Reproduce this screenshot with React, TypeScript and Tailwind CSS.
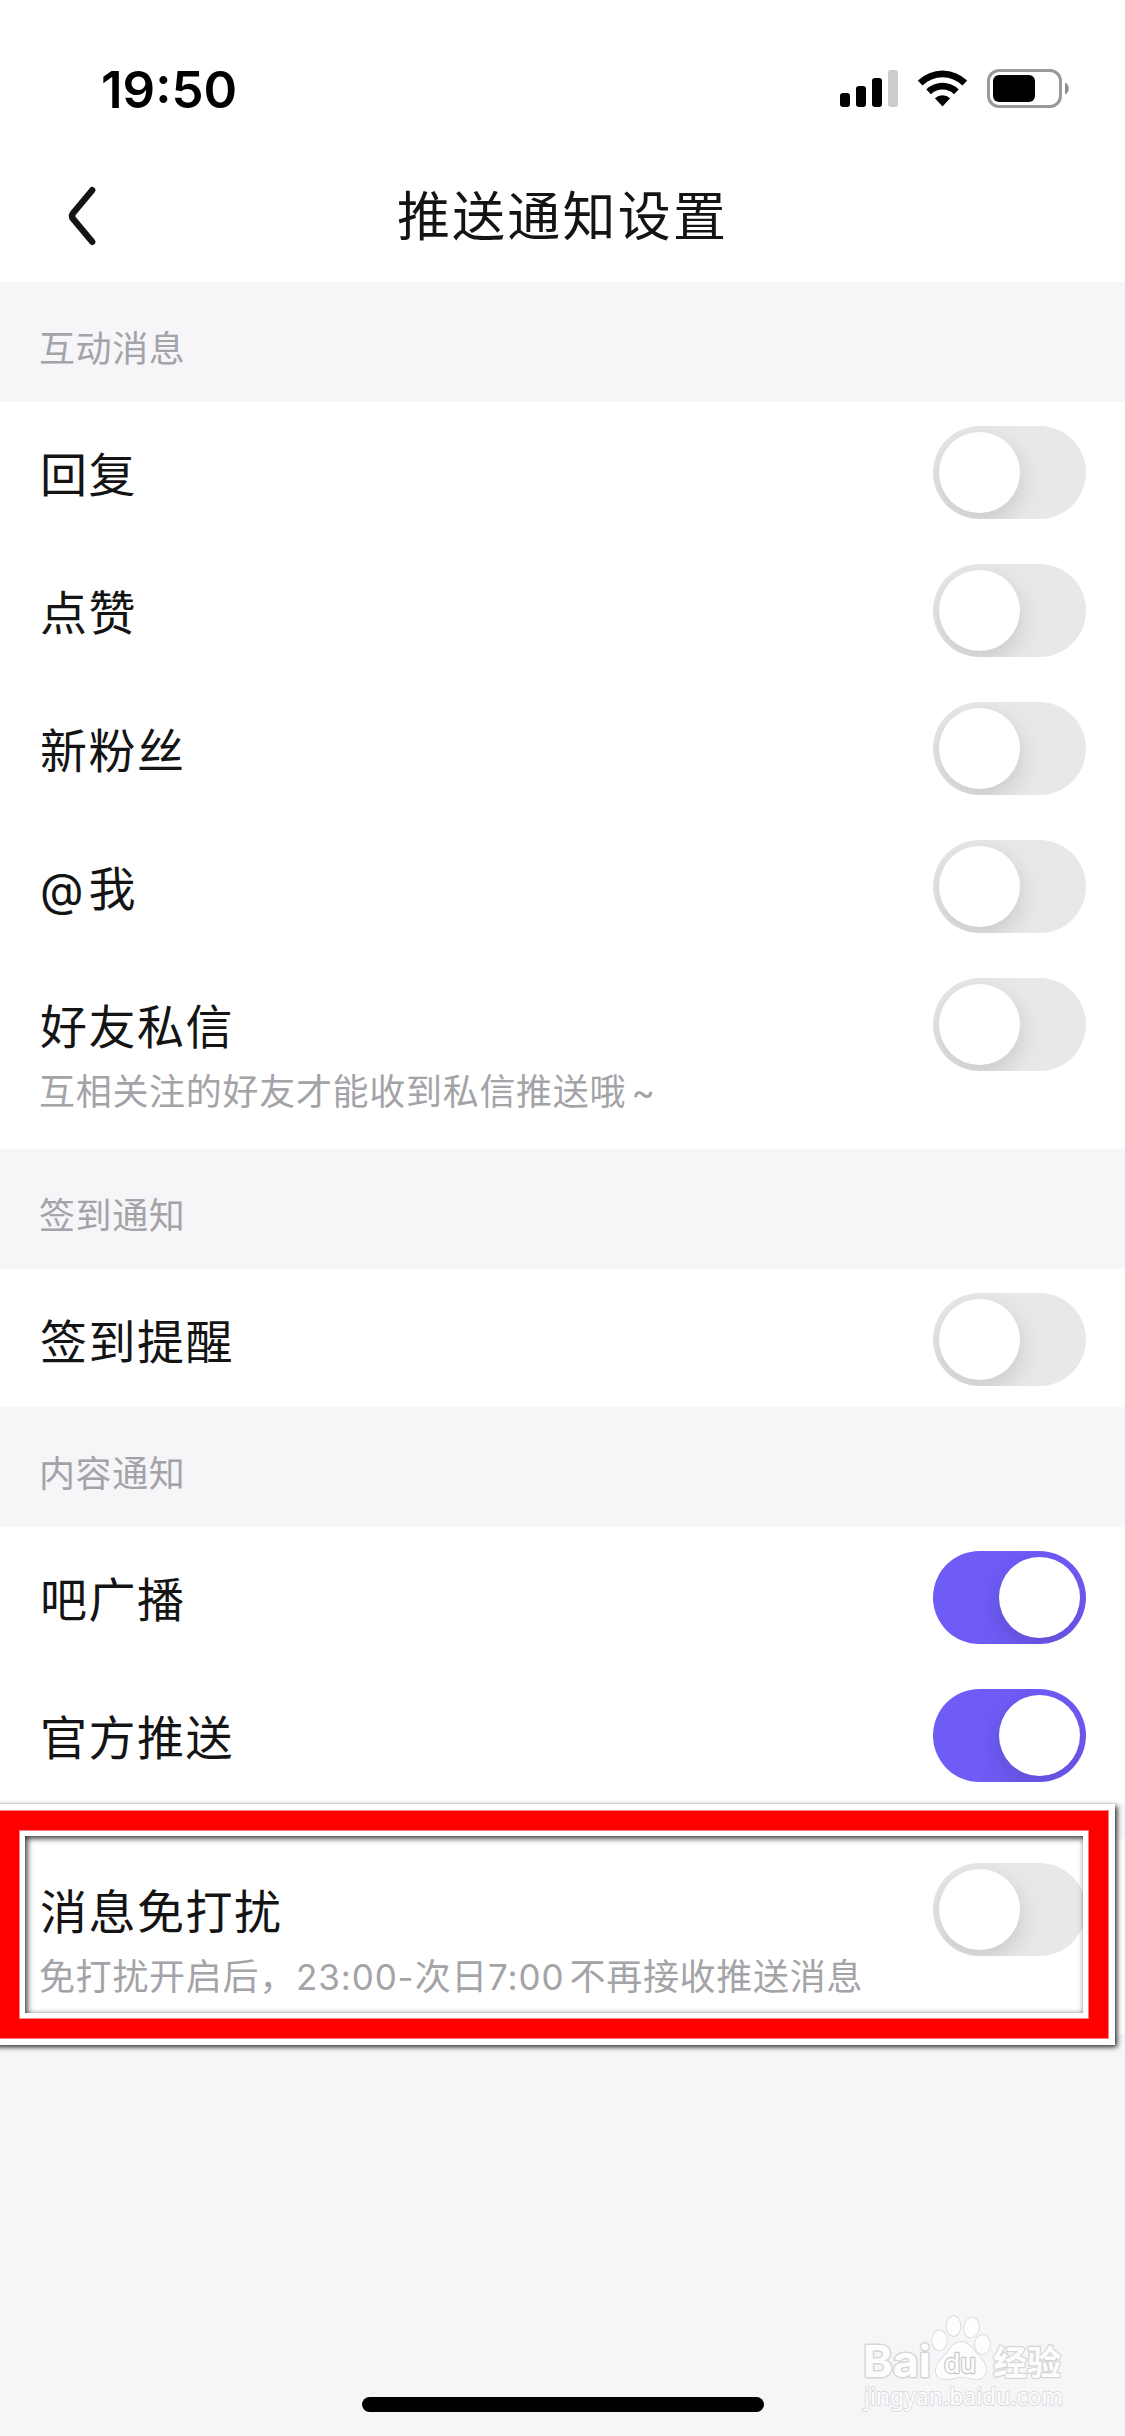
import type { ReactNode } from "react";

function Toggle({ on = false }: { on?: boolean }) {
  return (
    <div
      role="switch"
      aria-checked={on}
      className={
        on
          ? "flex h-[93px] w-[153px] shrink-0 items-center justify-end overflow-hidden rounded-full bg-[#6f5bf6] p-[6px]"
          : "flex h-[93px] w-[153px] shrink-0 items-center justify-start overflow-hidden rounded-full bg-[#e8e8e8] p-[6px]"
      }
    >
      <div className="size-[81px] rounded-full bg-white shadow-[0px_9px_24px_rgba(0,0,0,0.14)]" />
    </div>
  );
}

function SectionHeader({ children }: { children: string }) {
  return (
    <h2 className="flex h-[120px] items-center bg-[#f6f6f9] px-[39px] pt-[14px] text-[36px] leading-none tracking-[0.6px] text-[#a3a3a8]">
      {children}
    </h2>
  );
}

function Row({ label, on, note }: { label: ReactNode; on?: boolean; note?: ReactNode }) {
  return (
    <div className={note ? "h-[195px] bg-white px-[39px]" : "h-[138px] bg-white px-[39px]"}>
      <div className="flex h-[138px] items-center justify-between pt-[3px]">
        <span className="pt-[3px] pl-px text-[47px] leading-none tracking-[1.5px] text-[#141414]">{label}</span>
        <Toggle on={on} />
      </div>
      {note && (
        <p className="-mt-[20px] text-[36px] leading-[40px] tracking-[0.7px] whitespace-nowrap text-[#a3a3a8]">
          {note}
        </p>
      )}
    </div>
  );
}

function StatusIcons() {
  return (
    <div className="flex items-center">
      <svg className="h-[37px] w-[58px]" viewBox="0 0 58 37" aria-hidden="true">
        <rect x="0" y="23" width="10" height="14" rx="3" />
        <rect x="16" y="16" width="10" height="21" rx="3" />
        <rect x="32" y="8" width="10" height="29" rx="3" />
        <rect x="48" y="0" width="10" height="37" rx="3" fill="#cccccc" />
      </svg>
      <svg className="ml-[19px] h-[37px] w-[51px]" viewBox="0 0 51 37" aria-hidden="true">
        <path d="M0.8 10.6 A35.5 35.5 0 0 1 50.2 10.6 L45.5 15.4 A28.8 28.8 0 0 0 5.5 15.4 Z" />
        <path d="M9.3 19.4 A23.3 23.3 0 0 1 41.7 19.4 L37 24.2 A16.6 16.6 0 0 0 14 24.2 Z" />
        <path d="M17.9 28.2 A11 11 0 0 1 33.1 28.2 L25.5 36.5 Z" />
      </svg>
      <svg className="ml-[19px] h-[39px] w-[83px]" viewBox="0 0 83 39" aria-hidden="true">
        <rect x="1.5" y="1.5" width="72" height="36" rx="10.5" fill="none" stroke="#999999" strokeWidth="3" />
        <rect x="6" y="6" width="42" height="27" rx="6" />
        <path d="M78 13.5 C83 15.5 83 23.5 78 25.5 Z" fill="#8c8c8c" />
      </svg>
    </div>
  );
}

function Highlight() {
  return (
    <div className="pointer-events-none absolute top-[1804px] -left-[7px] w-[1122px] border-[6px] border-white shadow-[2px_2px_5px_0px_rgba(0,0,0,0.85)]">
      <div className="border border-[#ff8080]">
        <div className="border-[19px] border-[#ff0000]">
          <div className="border border-[#ff8080]">
            <div className="border-[5px] border-white">
              <div className="h-[177px] shadow-[inset_2px_2px_6px_0px_rgba(0,0,0,0.85)]" />
            </div>
          </div>
        </div>
      </div>
    </div>
  );
}

function Watermark() {
  return (
    <div className="absolute top-[2310px] left-[860px] w-[210px]">
      <svg className="h-[110px] w-[210px]" viewBox="0 0 210 110" fill="#fdfdfe" stroke="#d6d6d8" strokeWidth="1.5" strokeLinejoin="round" aria-label="Baidu 经验 jingyan.baidu.com">
        <g className="[paint-order:stroke]">
          <text x="3" y="67" fontFamily="Inter, sans-serif" fontWeight="700" fontSize="44" textLength="68" lengthAdjust="spacingAndGlyphs" strokeWidth="3">Bai</text>
          <path d="M101 32 C108 32 112 37 116 43 C121 49 126 52 126 60 C126 67 120 70 114 69 C109 68 105 67 101 67 C97 67 92 69 87 69 C80 70 75 66 76 59 C77 52 82 49 87 43 C91 37 94 32 101 32 Z" />
          <ellipse cx="79.5" cy="30.5" rx="7.5" ry="10" />
          <ellipse cx="93.5" cy="16" rx="7" ry="10" />
          <ellipse cx="111.5" cy="17.5" rx="7.5" ry="10" transform="rotate(12 111.5 17.5)" />
          <ellipse cx="122.5" cy="34.5" rx="7.5" ry="9.5" />
          <text x="84" y="63" fontFamily="Inter, sans-serif" fontWeight="500" fontSize="27" textLength="32" lengthAdjust="spacingAndGlyphs" stroke="#c8c8cb" strokeWidth="2.5">du</text>
          <text x="133" y="65" fontFamily="'Noto Sans CJK SC', sans-serif" fontWeight="700" fontSize="34" textLength="68" lengthAdjust="spacingAndGlyphs" strokeWidth="2.5">经验</text>
          <text x="4" y="95" fontFamily="'Noto Sans', sans-serif" fontSize="23" textLength="199" lengthAdjust="spacingAndGlyphs" stroke="#dcdcde" strokeWidth="2">jingyan.baidu.com</text>
        </g>
      </svg>
    </div>
  );
}

export default function App() {
  return (
    <main className="relative h-[2436px] w-[1125px] overflow-hidden bg-[#f6f6f9] font-['Inter','Noto_Sans_CJK_SC',sans-serif]">
      <header className="h-[282px] bg-white">
        <div className="flex h-[132px] items-start justify-between pr-[55px] pl-[101px]">
          <time className="mt-[65px] text-[51px] leading-[50px] font-semibold text-black">19:50</time>
          <div className="mt-[69px]">
            <StatusIcons />
          </div>
        </div>
        <div className="grid h-[150px] grid-cols-[200px_1fr_200px] items-start">
          <svg className="mt-[53px] ml-[66px] h-[62px] w-[32px]" viewBox="0 0 32 62" fill="none" stroke="#141414" strokeWidth="6.4" strokeLinecap="round" aria-label="返回">
            <path d="M26.2 5.2 L7.2 28 Q4.8 31 7.2 34 L26.2 56.8" />
          </svg>
          <h1 className="mt-[59px] text-center text-[53px] leading-[53px] tracking-[2.2px] text-[#141414]">推送通知设置</h1>
        </div>
      </header>

      <SectionHeader>互动消息</SectionHeader>
      <Row label="回复" />
      <Row label="点赞" />
      <Row label="新粉丝" />
      <Row label={<><span className="mr-[5px] text-[45px] tracking-normal">@</span>我</>} />
      <Row label="好友私信" note={<>互相关注的好友才能收到私信推送哦<span className="ml-[5px]">~</span></>} />

      <SectionHeader>签到通知</SectionHeader>
      <Row label="签到提醒" />

      <SectionHeader>内容通知</SectionHeader>
      <Row label="吧广播" on />
      <Row label="官方推送" on />

      <div className="mt-[36px]">
        <Row
          label="消息免打扰"
          note={
            <>
              免打扰开启后，
              <span className="text-[35px] tracking-[0.9px]">23:00-</span>次日
              <span className="mr-[5px] text-[35px] tracking-[0.9px]">7:00</span>
              不再接收推送消息
            </>
          }
        />
      </div>

      <Highlight />
      <Watermark />
      <div className="absolute top-[2397px] left-[362px] h-[15px] w-[402px] rounded-full bg-black" />
    </main>
  );
}
